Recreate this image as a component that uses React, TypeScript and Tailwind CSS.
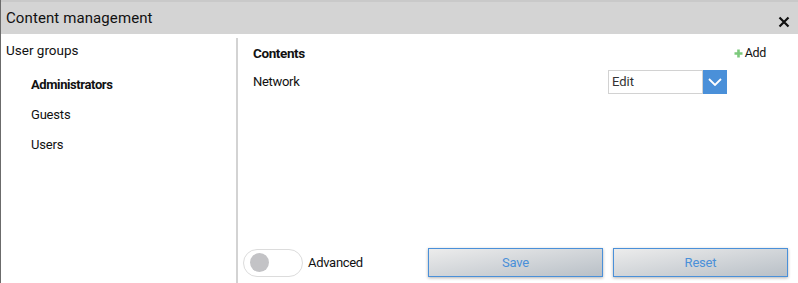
import React from "react";

export default function App() {
  return (
    <div
      className="w-[798px] h-[283px] bg-white overflow-hidden flex flex-col border-l border-[#6b6b6b] text-[#111]"
      style={{ fontFamily: "Roboto, 'Liberation Sans', sans-serif" }}
    >
      <div className="h-[2px] bg-[#c9c9c9] shrink-0" />
      <div className="h-[32px] bg-[#d4d4d4] shrink-0 flex items-center justify-between pl-[5px] pr-[8px]">
        <span className="text-[15px] tracking-[0.1px] text-[#111]">Content management</span>
        <svg width="12" height="12" viewBox="0 0 12 12" className="mt-[8px]">
          <path d="M1.5 1.5 L10.5 10.5 M10.5 1.5 L1.5 10.5" stroke="#111" strokeWidth="2.2" />
        </svg>
      </div>
      <div className="flex flex-1 min-h-0">
        <div className="w-[235px] shrink-0 pt-[6px]">
          <div className="text-[13.5px] leading-[20px] pl-[5px]">User groups</div>
          <div className="mt-[10px] pl-[30px] text-[13px]">
            <div className="h-[30px] leading-[30px] font-bold tracking-[-0.4px]">Administrators</div>
            <div className="h-[30px] leading-[30px] tracking-[-0.2px]">Guests</div>
            <div className="h-[30px] leading-[30px] tracking-[-0.2px]">Users</div>
          </div>
        </div>
        <div className="w-[2px] bg-[#d3d3d3] mt-[4px] shrink-0" />
        <div className="flex-1 flex flex-col pl-[15px] pr-[10px]">
          <div className="flex items-center justify-between h-[20px] mt-[9px]">
            <span className="text-[13.5px] font-bold tracking-[-0.4px]">Contents</span>
            <span className="flex items-center text-[12.5px] tracking-[-0.3px] pr-[22px]">
              <svg width="9" height="9" viewBox="0 0 9 9" className="mr-[2px]">
                <path d="M4.5 0.5 V8.5 M0.5 4.5 H8.5" stroke="#7cc97c" strokeWidth="2.6" />
              </svg>
              Add
            </span>
          </div>
          <div className="flex items-center mt-[7px] h-[24px]">
            <span className="text-[13px] tracking-[-0.3px] w-[355px]">Network</span>
            <div className="flex h-[24px]">
              <div className="w-[95px] border border-[#d2d2d2] flex items-center pl-[3px] text-[13px] text-[#333]">
                Edit
              </div>
              <div className="w-[24px] bg-[#4a90d9] flex items-center justify-center">
                <svg width="14" height="8" viewBox="0 0 14 8">
                  <path d="M1 1 L7 7 L13 1" stroke="#fff" strokeWidth="1.8" fill="none" />
                </svg>
              </div>
            </div>
          </div>
          <div className="flex-1" />
          <div className="flex items-center mb-[6px] h-[29px]">
            <div className="w-[60px] h-[28px] rounded-full border border-[#dcdcdc] flex items-center pl-[6px] ml-[-10px]">
              <div className="w-[19px] h-[19px] rounded-full bg-[#c3c3c6]" />
            </div>
            <span className="text-[13px] tracking-[-0.3px] ml-[5px] w-[120px]">Advanced</span>
            <button className="w-[175px] h-[29px] border border-[#4a90d9] bg-gradient-to-br from-[#ececec] to-[#b9c0c7] text-[#4a90d9] text-[13px] tracking-[-0.2px] shadow-[0_1px_3px_rgba(0,0,0,0.3)]">
              Save
            </button>
            <button className="w-[175px] h-[29px] ml-[10px] border border-[#4a90d9] bg-gradient-to-br from-[#ececec] to-[#b9c0c7] text-[#4a90d9] text-[13px] tracking-[-0.2px] shadow-[0_1px_3px_rgba(0,0,0,0.3)]">
              Reset
            </button>
          </div>
        </div>
      </div>
    </div>
  );
}
